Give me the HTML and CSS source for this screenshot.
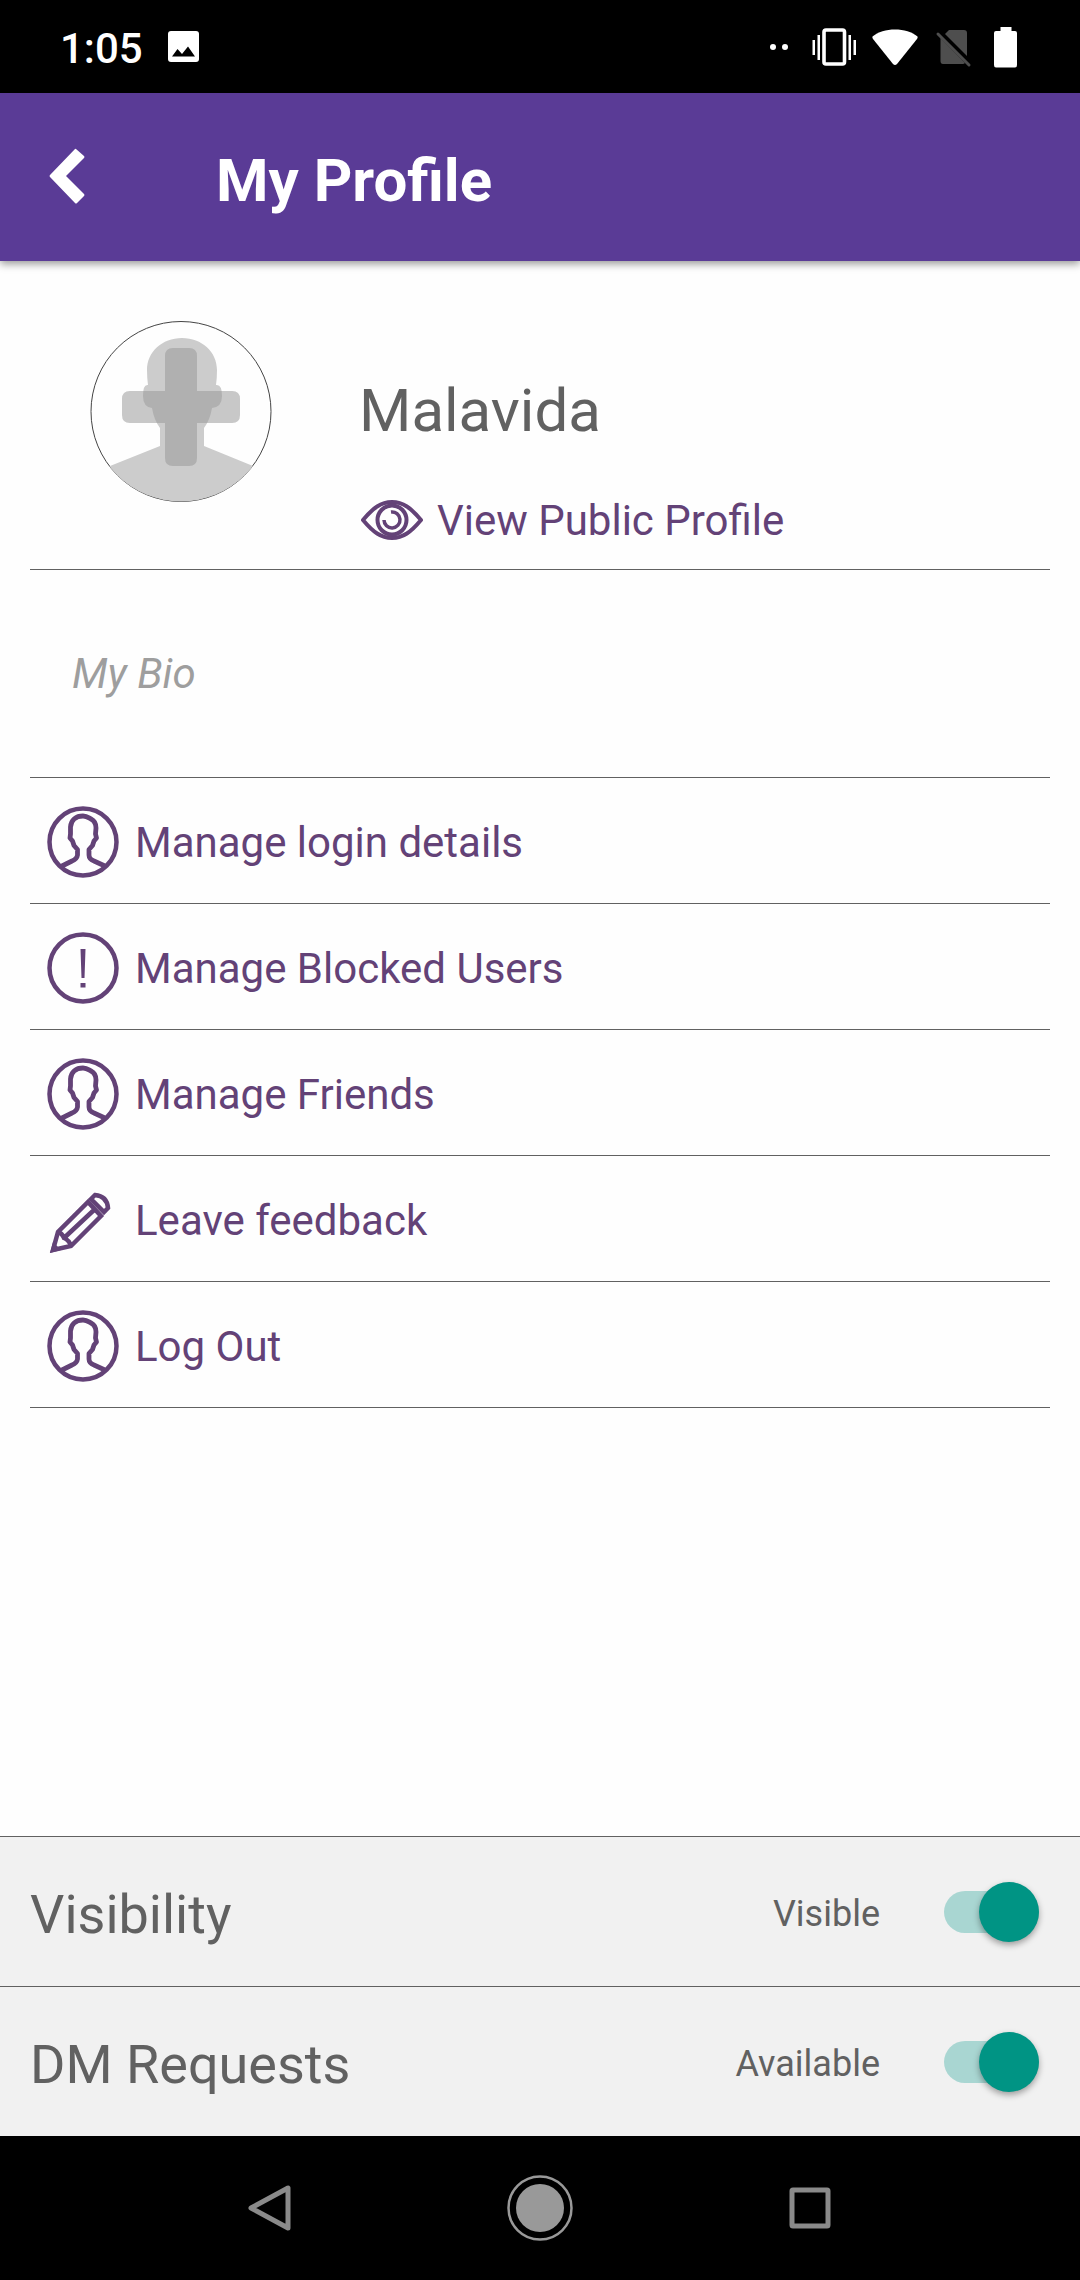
FILE: index.html
```html
<!DOCTYPE html>
<html lang="en">
<head>
<meta charset="utf-8">
<meta name="viewport" content="width=device-width, initial-scale=1">
<title>My Profile</title>
<link rel="stylesheet" href="styles.css">
</head>
<body>
<svg class="defs" aria-hidden="true">
  <symbol id="icon-user" viewBox="0 0 72 72">
    <circle cx="36" cy="36" r="33.500" stroke-width="4.500"/>
    <path stroke-width="4.800" stroke-linejoin="round" d="M14 60.500L25 55Q30 53 30.500 49V43.500L27 39.500L25.500 35L23 32L23.500 28V21C24 14 29 10 36 10C40 10 42 12 44 13C48 15 49 18 49 22L48.500 28L49.500 32L47 35L45.500 39.500L42 43.500V49Q42 53 47 55L59 60.500"/>
  </symbol>
</svg>
<div class="screen">
  <div class="status-bar">
    <div class="status-group status-left">
      <span class="clock">1:05</span>
      <svg width="31" height="31" viewBox="0 0 31 31"><rect width="31" height="31" rx="3" fill="#fff"/><path d="M4 25.500L9.500 18L14 23L20 15.500L27 25.500Z" fill="#000"/></svg>
    </div>
    <div class="status-group status-right">
      <svg width="248" height="42" viewBox="0 0 248 42" fill="#fff">
        <circle cx="3" cy="21" r="3"/><circle cx="15" cy="21" r="3"/>
        <rect x="54" y="4" width="20.500" height="34" rx="2" fill="none" stroke="#fff" stroke-width="3.600"/>
        <path d="M42.500 14h2.500v15h-2.500zM47.500 9h2.500v25h-2.500zM78.500 9h2.500v25h-2.500zM83.500 14h2.500v15h-2.500z"/>
        <path d="M102.500 10.500C113 1 137 1 147.500 10.500Q148 11.500 147 13L127 38Q125 40 123 38L103 13Q102 11.500 102.500 10.500Z"/>
        <g fill="#4e4e4e"><path d="M179 4H194Q197 4 197 7V30L175 8ZM170.500 12L195 37Q194 38 193 38H173Q170.500 38 170.500 35Z"/><path d="M168 8L199 39" stroke="#4e4e4e" stroke-width="3" stroke-linecap="round"/></g>
        <path d="M230.500 1H241.500V5H245Q247 5 247 7V39Q247 41.500 245 41.500H226Q224 41.500 224 39V7Q224 5 226 5H230.500Z"/>
      </svg>
    </div>
  </div>

  <header class="app-bar">
    <button class="back" type="button" aria-label="Back">
      <svg width="36" height="56" viewBox="0 0 36 56"><path d="M27 1L35 8Q36 9 35 10L17 28L35 46Q36 47 35 48L28 55Q27 56 26 55L1 29Q0 28 1 27L26 1Q26.500 .500 27 1Z" fill="#fff"/></svg>
    </button>
    <h1 class="title">My Profile</h1>
  </header>

  <main class="content">
    <section class="profile">
      <svg class="avatar" width="182" height="182" viewBox="0 0 182 182" role="img" aria-label="Profile picture">
        <clipPath id="avatar-clip"><circle cx="91" cy="91" r="90.500"/></clipPath>
        <circle cx="91" cy="91.500" r="90" fill="none" stroke="#444" stroke-width="1"/>
        <path clip-path="url(#avatar-clip)" fill="#ccc" d="M20 146L70 126V108Q64 100 62 88Q53 87 53 76Q53 64 58 65Q57 58 57 50C57 32 72 18 92 18C112 18 127 32 127 50Q127 58 126 65Q132 64 132 76Q132 87 122 88Q120 100 114 108V126L163 146L182 160V182H0V160Z"/>
        <path fill="#979797" fill-opacity=".53" d="M83 28H99Q107 28 107 36V71H142Q150 71 150 79V95Q150 103 142 103H107V138Q107 146 99 146H83Q75 146 75 138V103H40Q32 103 32 95V79Q32 71 40 71H75V36Q75 28 83 28Z"/>
      </svg>
      <div class="profile-info">
        <h2 class="name">Malavida</h2>
        <a class="public-link" href="#public">
          <svg width="62" height="42" viewBox="0 0 62 42" fill="none" stroke="currentColor" stroke-width="4" stroke-linejoin="round">
            <path d="M2 20C12 8 20 2 31 2C42 2 50 8 60 20C50 32 42 38 31 38C20 38 12 32 2 20Z"/>
            <circle cx="31" cy="20" r="14.500"/><path stroke-width="3.500" d="M30 12A8 8 0 1 1 23 20"/>
          </svg>
          <span>View Public Profile</span>
        </a>
      </div>
    </section>

    <input class="bio" type="text" placeholder="My Bio" aria-label="My Bio">

    <nav class="menu">
      <a class="menu-item" href="#login"><svg class="icon"><use href="#icon-user"/></svg><span>Manage login details</span></a>
      <a class="menu-item" href="#blocked"><svg class="icon" viewBox="0 0 72 72"><circle cx="36" cy="36" r="33.500" stroke-width="4.500"/><path fill="currentColor" stroke="none" d="M33.500 17H38.500L37.500 46H34.500ZM33.500 51H38.500V55.500H33.500Z"/></svg><span>Manage Blocked Users</span></a>
      <a class="menu-item" href="#friends"><svg class="icon"><use href="#icon-user"/></svg><span>Manage Friends</span></a>
      <a class="menu-item" href="#feedback"><svg class="icon" viewBox="0 0 72 72">
        <path stroke-width="4.500" d="M6 66L11 48L41 18L54 32L24 62ZM11 48Q15 49 17 54Q22 56 24 62M17 54L47 26"/>
        <path stroke-width="4.500" d="M44 15L48 11Q60 12 61 24L57 28Z"/><path stroke="none" fill="currentColor" d="M3 69L6 58L14 66Z"/>
      </svg><span>Leave feedback</span></a>
      <a class="menu-item" href="#logout"><svg class="icon"><use href="#icon-user"/></svg><span>Log Out</span></a>
    </nav>
  </main>

  <section class="settings">
    <div class="setting">
      <label class="setting-name" for="visibility">Visibility</label>
      <span class="setting-value">Visible</span>
      <input class="switch" id="visibility" type="checkbox" role="switch" checked>
    </div>
    <div class="setting">
      <label class="setting-name" for="requests">DM Requests</label>
      <span class="setting-value">Available</span>
      <input class="switch" id="requests" type="checkbox" role="switch" checked>
    </div>
  </section>

  <div class="system-nav">
    <button type="button" aria-label="System back"><svg width="66" height="66" viewBox="0 0 66 66"><path d="M51 13V53L14 33Z" fill="none" stroke="#8a8a8a" stroke-width="5" stroke-linejoin="round"/></svg></button>
    <button type="button" aria-label="Home"><svg width="66" height="66" viewBox="0 0 66 66"><circle cx="33" cy="33" r="31.500" fill="none" stroke="#999" stroke-width="2.500"/><circle cx="33" cy="33" r="24" fill="#999"/></svg></button>
    <button type="button" aria-label="Recent apps"><svg width="66" height="66" viewBox="0 0 66 66"><rect x="15" y="15" width="36" height="36" rx="1" fill="none" stroke="#8a8a8a" stroke-width="5" stroke-linejoin="round"/></svg></button>
  </div>
</div>
</body>
</html>
```
FILE: styles.css
```css
* {
  box-sizing: border-box;
}

body {
  margin: 0;
  background: #fefefe;
  color: #616161;
  font-family: Roboto, "Noto Sans", sans-serif;
  font-size: 42px;
  line-height: 50px;
}

svg {
  display: block;
  flex: none;
}

button {
  padding: 0;
  border: 0;
  background: none;
}

a {
  color: #634277;
  text-decoration: none;
}

.defs {
  position: absolute;
  width: 0;
  height: 0;
}

.screen {
  display: flex;
  flex-direction: column;
  min-height: 100vh;
}

/* Status bar */
.status-bar {
  display: flex;
  align-items: center;
  justify-content: space-between;
  height: 93px;
  padding: 0 62px 0 60px;
  background: #000;
  color: #fff;
}

.status-group {
  display: flex;
  align-items: center;
  gap: 25px;
}

.clock {
  padding-top: 4px;
  font-weight: 500;
}

/* App bar */
.app-bar {
  display: flex;
  align-items: center;
  gap: 131px;
  height: 168px;
  padding: 0 49px;
  background: #5a3b96;
  color: #fff;
  box-shadow: 0 3px 8px rgba(0, 0, 0, 0.4);
}

.back {
  padding-bottom: 3px;
}

.title {
  margin: 0;
  padding-top: 7px;
  font-size: 60px;
  font-weight: 700;
  line-height: 70px;
}

/* Profile */
.content {
  padding: 0 30px;
}

.profile {
  display: flex;
  gap: 87px;
  padding: 59px 0 23px 60px;
  border-bottom: 1px solid #616161;
}

.profile-info {
  display: flex;
  flex-direction: column;
  gap: 50px;
  padding-top: 56px;
}

.name {
  margin: 0;
  font-size: 60px;
  font-weight: 400;
  line-height: 70px;
}

.public-link {
  display: flex;
  align-items: center;
  gap: 14px;
  padding-left: 2px;
}

.bio {
  display: block;
  width: 100%;
  height: 208px;
  padding: 0 42px;
  border: 0;
  border-bottom: 1px solid #616161;
  background: none;
  color: #616161;
  font: inherit;
  font-style: italic;
}

.bio::placeholder {
  color: #9e9e9e;
  opacity: 1;
}

/* Menu */
.menu-item {
  display: flex;
  align-items: center;
  gap: 16px;
  height: 126px;
  padding: 2px 17px 0;
  border-bottom: 1px solid #616161;
}

.menu-item span {
  padding-top: 2px;
}

.icon {
  width: 72px;
  height: 72px;
  fill: none;
  stroke: currentColor;
}

/* Settings */
.settings {
  margin-top: auto;
  background: #f1f1f1;
}

.setting {
  display: flex;
  align-items: center;
  height: 150px;
  padding: 0 41px 0 30px;
  border-top: 1px solid #616161;
}

.setting-name {
  flex: 1;
  padding-top: 6px;
  font-size: 54px;
  line-height: 64px;
}

.setting-value {
  padding: 4px 64px 0 0;
  font-size: 36px;
}

.switch {
  position: relative;
  width: 95px;
  height: 42px;
  margin: 0;
  border-radius: 21px;
  background: #bdbdbd;
  appearance: none;
}

.switch::before {
  content: "";
  position: absolute;
  top: -9px;
  left: 0;
  width: 60px;
  height: 60px;
  border-radius: 50%;
  background: #fafafa;
  box-shadow: 0 3px 6px rgba(0, 0, 0, 0.35);
}

.switch:checked {
  background: #a9d6d2;
}

.switch:checked::before {
  right: 0;
  left: auto;
  background: #009484;
}

/* System navigation */
.system-nav {
  display: flex;
  align-items: center;
  justify-content: center;
  gap: 204px;
  height: 144px;
  background: #000;
}
```
